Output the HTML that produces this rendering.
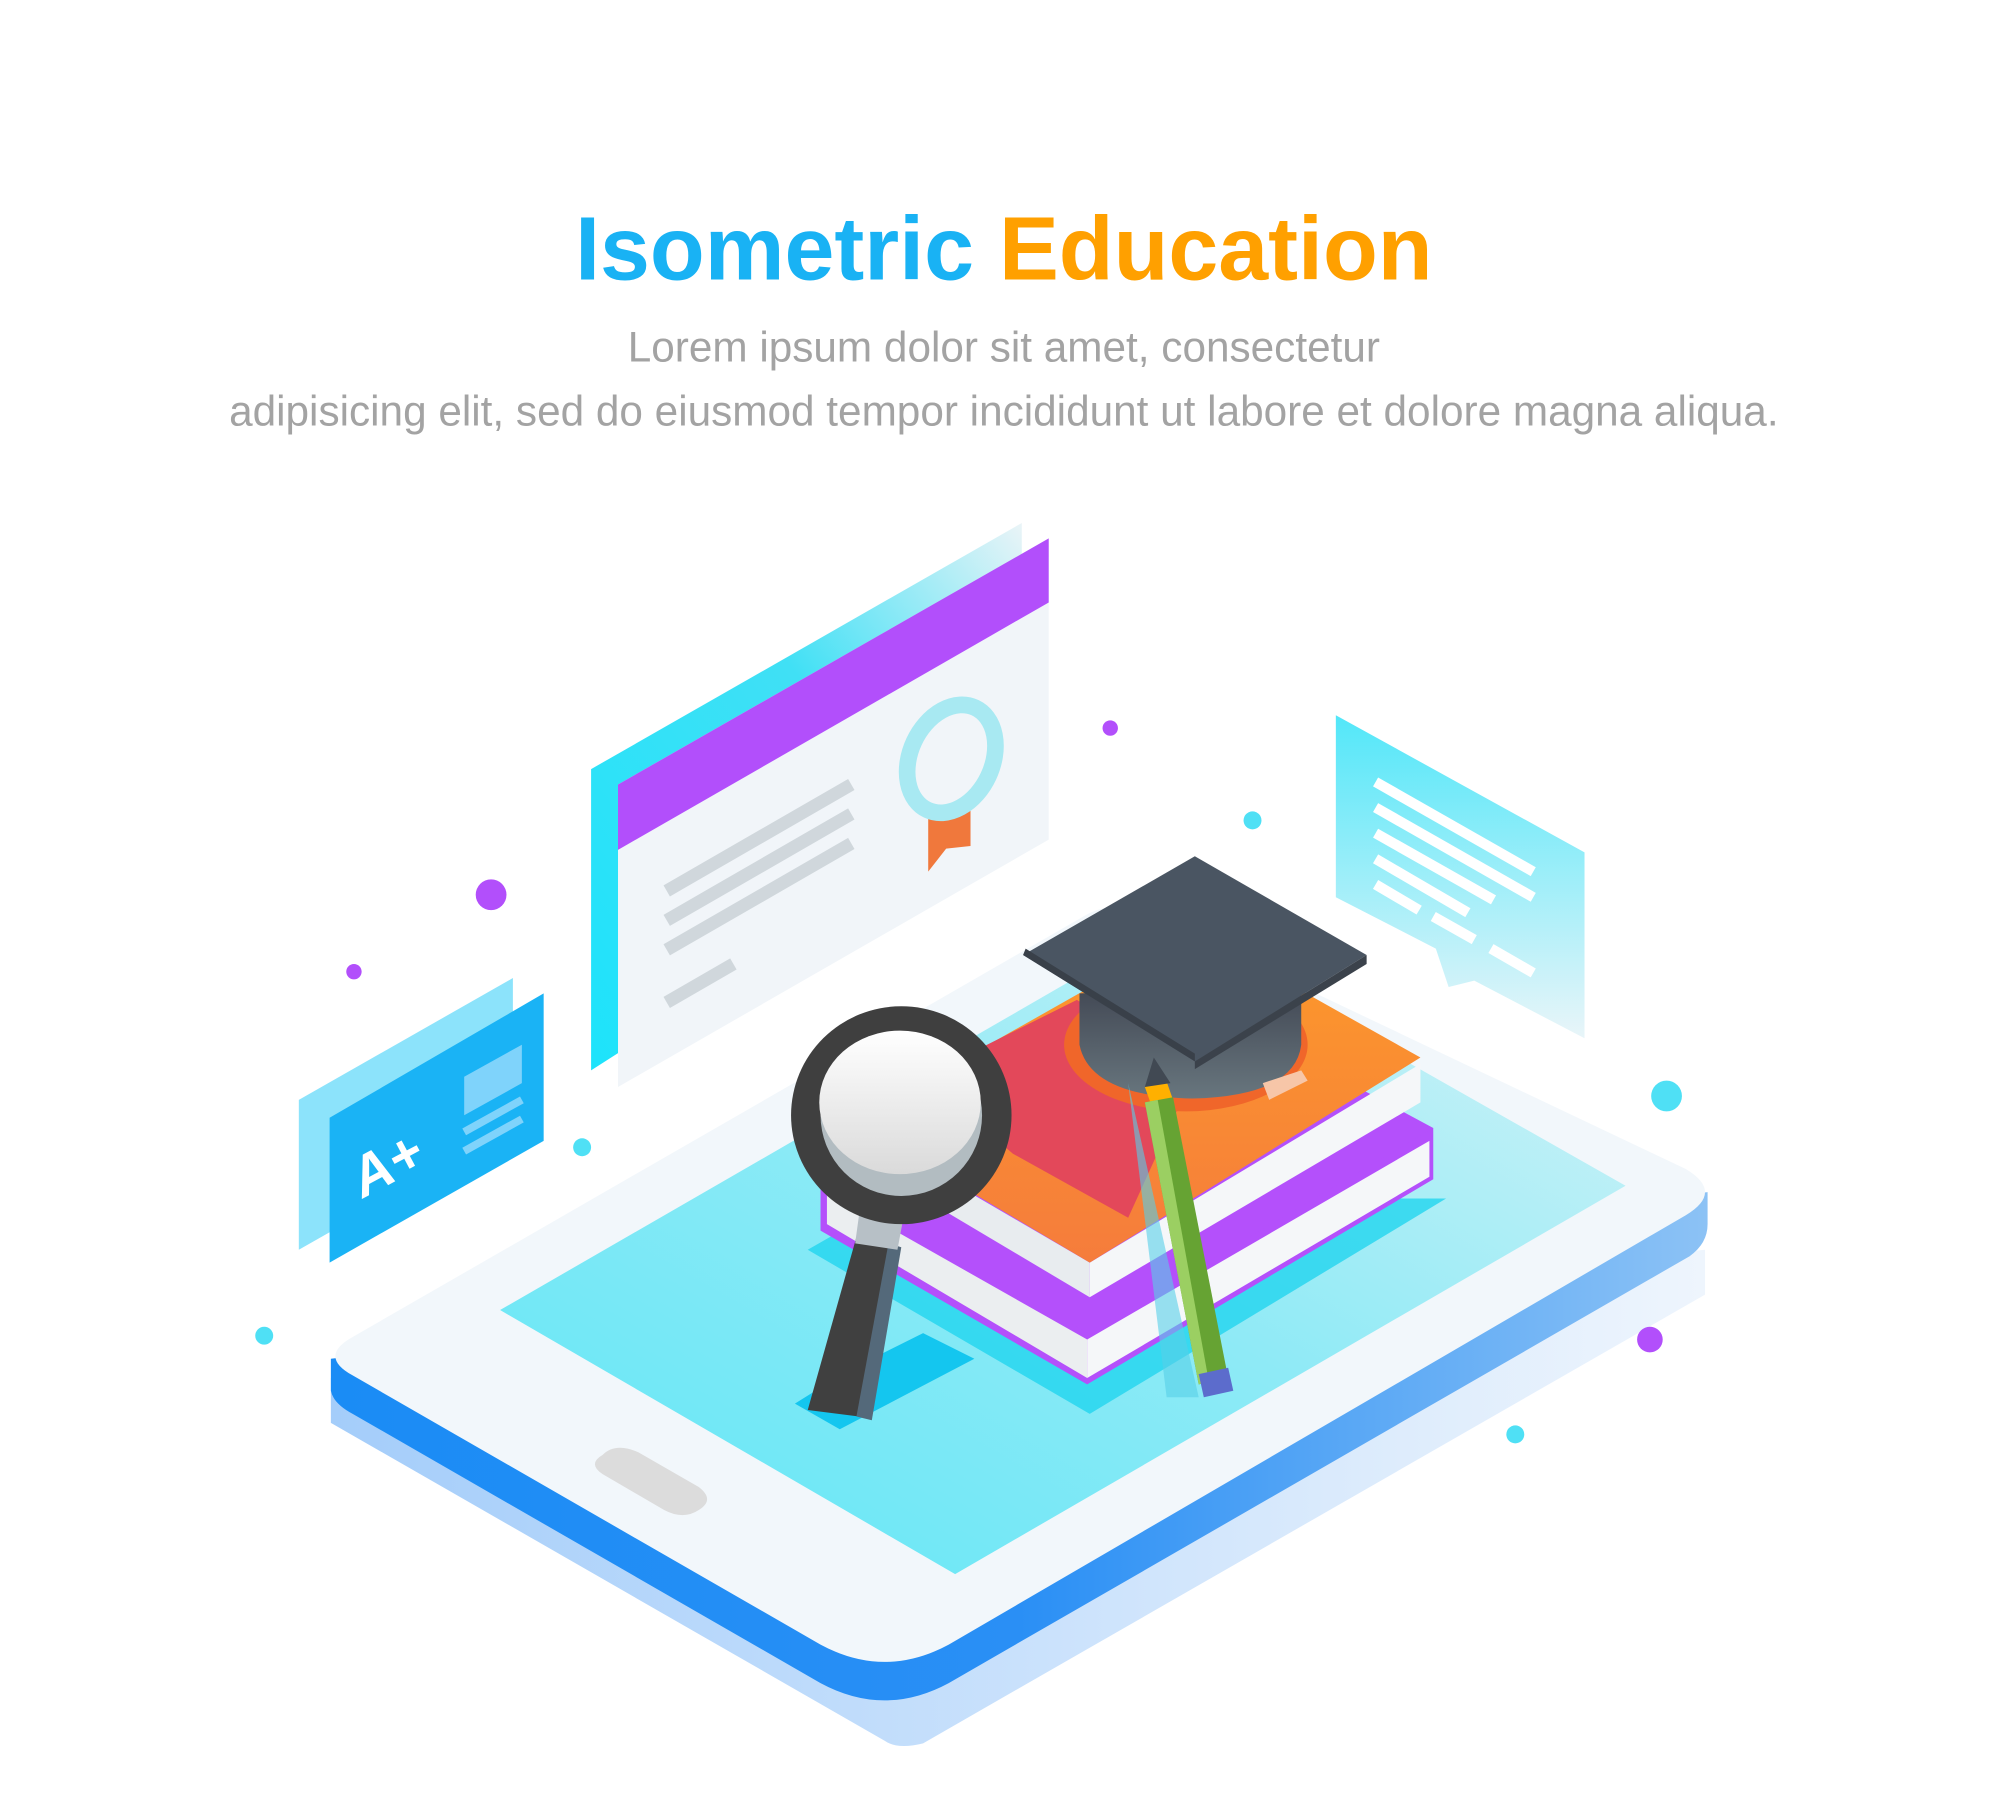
<!DOCTYPE html>
<html><head><meta charset="utf-8"><style>
html,body{margin:0;padding:0;background:#fff;}
svg{display:block}
</style></head><body>
<svg width="2000" height="1801" viewBox="0 0 1560 1405" xmlns="http://www.w3.org/2000/svg">
<defs>
<linearGradient id="side" x1="0" y1="0" x2="1" y2="0"><stop offset="0" stop-color="#1a8cf5"/><stop offset="0.5" stop-color="#2a8ff5"/><stop offset="1" stop-color="#8cc2f5"/></linearGradient>
<linearGradient id="shadow" x1="0" y1="0" x2="1" y2="0"><stop offset="0" stop-color="#a4cdfa"/><stop offset="1" stop-color="#eef5fd"/></linearGradient>
<linearGradient id="screen" x1="0" y1="1" x2="1" y2="0"><stop offset="0" stop-color="#5fe6f6"/><stop offset="0.5" stop-color="#8eeaf6"/><stop offset="1" stop-color="#d8f3f7"/></linearGradient>
<linearGradient id="bubble" x1="0" y1="0" x2="0" y2="1"><stop offset="0" stop-color="#3fe4f8"/><stop offset="1" stop-color="#e6f4f8"/></linearGradient>
<linearGradient id="cert" x1="0" y1="1" x2="1" y2="0"><stop offset="0" stop-color="#1de3fb"/><stop offset="0.6" stop-color="#40e0f5"/><stop offset="1" stop-color="#eaf4f7"/></linearGradient>
<linearGradient id="cap" x1="0" y1="0" x2="0" y2="1"><stop offset="0" stop-color="#424854"/><stop offset="1" stop-color="#68767e"/></linearGradient>
<linearGradient id="orange" x1="0" y1="0" x2="0" y2="1"><stop offset="0" stop-color="#fd9a2a"/><stop offset="1" stop-color="#f57c3c"/></linearGradient>
<linearGradient id="lens" x1="0" y1="0" x2="0" y2="1"><stop offset="0" stop-color="#fff"/><stop offset="1" stop-color="#dadada"/></linearGradient>
</defs>

<text x="783" y="218" text-anchor="middle" font-family="Liberation Sans, sans-serif" font-weight="bold" font-size="70"><tspan fill="#19b2f4">Isometric </tspan><tspan fill="#ffa000">Education</tspan></text>
<text x="783" y="282" text-anchor="middle" font-family="Liberation Sans, sans-serif" font-size="33" fill="#a3a3a3">Lorem ipsum dolor sit amet, consectetur</text>
<text x="783" y="332" text-anchor="middle" font-family="Liberation Sans, sans-serif" font-size="33" fill="#a3a3a3">adipisicing elit, sed do eiusmod tempor incididunt ut labore et dolore magna aliqua.</text>

<path d="M258 1110 L690 1358 Q700 1365 720 1360 L1330 1010 L1330 975 L258 1075 Z" fill="url(#shadow)"/>
<path d="M258 1060 L258 1085 Q260 1095 275 1103 L640 1313 Q690 1340 740 1313 L1318 980 Q1332 970 1332 955 L1332 930 Z" fill="url(#side)"/>
<path d="M275 1043 L845 715 Q870 700 900 715 L1315 912 Q1345 930 1315 948 L740 1283 Q690 1310 640 1283 L275 1073 Q248 1058 275 1043 Z" fill="#f2f7fb"/>
<path d="M390 1022 L910 722 L1268 925 L745 1228 Z" fill="url(#screen)"/>
<path d="M470 1135 Q480 1125 498 1133 L545 1160 Q558 1170 545 1178 Q533 1186 518 1178 L470 1150 Q458 1142 470 1135 Z" fill="#dcdcdc"/>

<path d="M630 975 L700 935 L1128 935 L850 1103 Z" fill="#22d4ef" opacity="0.8"/>
<path d="M620 1095 L660 1070 L720 1040 L760 1060 L655 1115 Z" fill="#14c6ef"/>

<path d="M640 925 L640 960 L848 1080 L1118 920 L1118 880 Z" fill="#b450fb"/>
<path d="M645 930 L848 1045 L848 1075 L645 955 Z" fill="#ebeef0"/>
<path d="M848 1045 L1115 890 L1115 918 L848 1075 Z" fill="#f5f7f9"/>
<path d="M640 915 L905 765 L1118 880 L848 1040 Z" fill="#b450fb"/>
<path d="M670 880 L850 985 L850 1012 L670 905 Z" fill="#e8ecef"/>
<path d="M850 985 L1108 830 L1108 860 L850 1012 Z" fill="#f5f7f9"/>
<path d="M665 875 L930 725 L1108 825 L850 985 Z" fill="url(#orange)"/>
<path d="M720 840 L840 780 L930 840 L880 950 L790 900 Z" fill="#e3485a"/>
<ellipse cx="925" cy="815" rx="95" ry="52" fill="#f0662a"/>
<path d="M842 775 L842 815 Q850 855 930 857 Q1010 855 1015 815 L1015 770 Z" fill="url(#cap)"/>
<path d="M985 845 L1015 835 L1020 843 L990 858 Z" fill="#f7c6a8"/>
<path d="M798 745 L932 668 L1066 745 L932 828 Z" fill="#4a5562"/>
<path d="M798 745 L932 828 L932 822 L800 740 Z" fill="#394049"/>
<path d="M932 828 L1066 745 L1066 752 L932 834 Z" fill="#3b424b"/>

<path d="M880 845 L910 1090 L935 1090 Z" fill="#56cfe8" opacity="0.6"/>
<path d="M893 848 L908 838 L915 858 L898 862 Z" fill="#ffb000"/>
<path d="M900 825 L893 848 L913 845 Z" fill="#414953"/>
<path d="M893 860 L915 856 L958 1075 L935 1080 Z" fill="#66a333"/>
<path d="M893 860 L903 858 L943 1078 L935 1080 Z" fill="#9bcf62"/>
<path d="M935 1072 L958 1067 L962 1085 L939 1090 Z" fill="#5c6ccc"/>

<path d="M630 1100 L668 965 L695 970 L670 1105 Z" fill="#404040"/>
<path d="M668 1105 L693 970 L703 973 L680 1108 Z" fill="#54697a"/>
<path d="M670 948 L705 948 L700 975 L667 970 Z" fill="#b7c0c6"/>
<ellipse cx="703" cy="870" rx="86" ry="85" fill="#3f3f3f"/>
<ellipse cx="703" cy="870" rx="63" ry="63" fill="#b2bcc1"/>
<ellipse cx="702" cy="860" rx="63" ry="56" fill="url(#lens)"/>

<path d="M461 600 L797 408 L797 620 L461 835 Z" fill="url(#cert)"/>
<path d="M482 612 L818 420 L818 655 L482 848 Z" fill="#f1f5f9"/>
<path d="M482 612 L818 420 L818 470 L482 663 Z" fill="#b24ffb"/>
<g stroke="#d0d7dc" stroke-width="10">
<line x1="520" y1="695" x2="664" y2="612"/>
<line x1="520" y1="718" x2="664" y2="635"/>
<line x1="520" y1="741" x2="664" y2="658"/>
<line x1="520" y1="782" x2="572" y2="752"/>
</g>
<path d="M724 630 L757 625 L757 660 L738 662 L724 680 Z" fill="#f0783c"/>
<ellipse cx="742" cy="592" rx="32" ry="44" transform="rotate(25 742 592)" fill="none" stroke="#a8e9f2" stroke-width="13"/>

<path d="M1042 558 L1236 665 L1236 810 L1150 765 L1130 770 L1120 740 L1042 700 Z" fill="url(#bubble)" opacity="0.9"/>
<g stroke="#fff" stroke-width="8">
<line x1="1073" y1="610" x2="1196" y2="680"/>
<line x1="1073" y1="630" x2="1196" y2="700"/>
<line x1="1073" y1="650" x2="1165" y2="702"/>
<line x1="1073" y1="670" x2="1145" y2="712"/>
<line x1="1073" y1="690" x2="1107" y2="710"/>
<line x1="1118" y1="715" x2="1150" y2="733"/>
<line x1="1163" y1="740" x2="1196" y2="759"/>
</g>

<path d="M233 858 L400 763 L400 880 L233 975 Z" fill="#8ce3fb"/>
<path d="M257 872 L424 775 L424 890 L257 985 Z" fill="#1ab3f5"/>
<text x="0" y="0" transform="translate(283 935) rotate(-28)" font-family="Liberation Sans, sans-serif" font-weight="bold" font-style="italic" font-size="44" fill="#fff">A+</text>
<path d="M362 840 L407 815 L407 845 L362 870 Z" fill="#7fd3fb"/>
<line x1="362" y1="883" x2="407" y2="858" stroke="#7fd3fb" stroke-width="6"/>
<line x1="362" y1="898" x2="407" y2="873" stroke="#7fd3fb" stroke-width="6"/>

<circle cx="383" cy="698" r="12" fill="#b24ffb"/>
<circle cx="276" cy="758" r="6" fill="#b24ffb"/>
<circle cx="866" cy="568" r="6" fill="#b24ffb"/>
<circle cx="1287" cy="1045" r="10" fill="#b24ffb"/>
<circle cx="977" cy="640" r="7" fill="#4fe0f5"/>
<circle cx="1300" cy="855" r="12" fill="#4fe0f5"/>
<circle cx="454" cy="895" r="7" fill="#4fe0f5"/>
<circle cx="206" cy="1042" r="7" fill="#4fe0f5"/>
<circle cx="1182" cy="1119" r="7" fill="#4fe0f5"/>
</svg>
</body></html>
